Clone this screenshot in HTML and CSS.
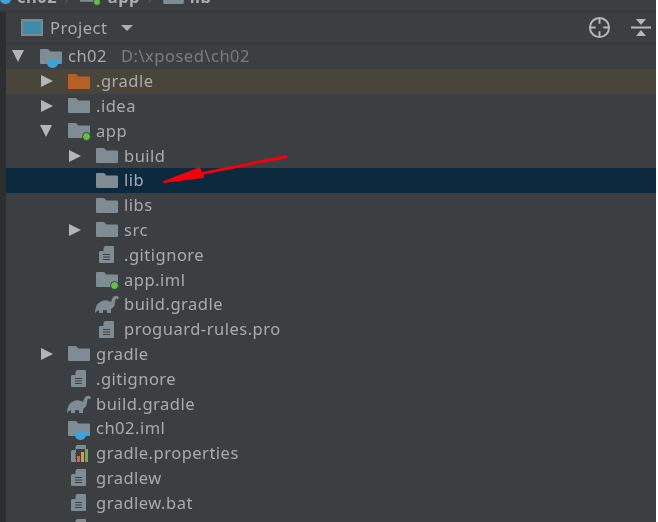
FILE: index.html
```html
<!DOCTYPE html>
<html lang="en">
<head>
    <meta charset="UTF-8">
    <meta name="viewport" content="width=device-width, initial-scale=1.0">
    <title>Project</title>
    <link rel="stylesheet" href="styles.css">
</head>
<body>
    <svg class="sprites" width="0" height="0">
        <symbol id="folder" viewBox="0 0 22 15">
            <path d="M0 1q0-1 1-1h7l2.500 2.500h10.500q1 0 1 1v10.500q0 1-1 1h-20q-1 0-1-1z"/>
        </symbol>
        <symbol id="file" viewBox="0 0 15 17">
            <path d="M6 0h8q1 0 1 1v15q0 1-1 1h-13q-1 0-1-1v-10z"/>
            <path class="cut" d="M4.500 0.500v4.500h-4.500zM4 8h7v1h-7zM4 10.500h7v1h-7zM4 13h7v1h-7z"/>
        </symbol>
        <symbol id="gradle" viewBox="0 0 24 18">
            <path d="M0 18q0-8 5-11q4-3 9-1l2 1q1-5 4-6q3-1 4 2q-1 2-2.500.5q-1.500.5-1.500 3.500q0 5-4 7v4h-4v-3q-2 .5-4 0v3h-4v-3q-2 .5-4 3z"/>
        </symbol>
    </svg>

    <div class="window">
        <div class="breadcrumb">
            <span class="crumb-cup"></span>
            <span class="crumb-text first">ch02</span>
            <span class="crumb-sep">/</span>
            <span class="crumb-module"><svg class="icon crumb-folder"><use href="#folder"/></svg><i class="dot"></i></span>
            <span class="crumb-text">app</span>
            <span class="crumb-sep">/</span>
            <svg class="icon crumb-folder wide"><use href="#folder"/></svg>
            <span class="crumb-text">lib</span>
        </div>

        <div class="panel">
            <div class="strip"></div>
            <div class="main">
                <header class="toolbar">
                    <span class="window-icon"></span>
                    <span class="toolbar-title">Project</span>
                    <span class="caret"></span>
                    <svg class="tool locate" viewBox="0 0 24 24">
                        <circle cx="12" cy="12" r="10"/>
                        <path d="M12 2v6M12 16v6M2 12h6M16 12h6"/>
                    </svg>
                    <svg class="tool collapse" viewBox="0 0 20 18">
                        <path class="solid" d="M5 0h10l-5 6zM5 17h10l-5-6z"/>
                        <path d="M0 8.500h20"/>
                    </svg>
                </header>

                <ul class="tree">
                    <li class="row d0"><i class="arrow open"></i><span class="node-icon"><svg class="icon"><use href="#folder"/></svg><i class="cup"></i></span><span class="label">ch02</span><span class="label path">D:\xposed\ch02</span></li>
                    <li class="row d1 excluded"><i class="arrow"></i><span class="node-icon"><svg class="icon orange"><use href="#folder"/></svg></span><span class="label">.gradle</span></li>
                    <li class="row d1"><i class="arrow"></i><span class="node-icon"><svg class="icon"><use href="#folder"/></svg></span><span class="label">.idea</span></li>
                    <li class="row d1"><i class="arrow open"></i><span class="node-icon"><svg class="icon"><use href="#folder"/></svg><i class="dot"></i></span><span class="label">app</span></li>
                    <li class="row d2"><i class="arrow"></i><span class="node-icon"><svg class="icon"><use href="#folder"/></svg></span><span class="label">build</span></li>
                    <li class="row d2 selected"><i class="arrow none"></i><span class="node-icon"><svg class="icon"><use href="#folder"/></svg></span><span class="label">lib</span></li>
                    <li class="row d2"><i class="arrow none"></i><span class="node-icon"><svg class="icon"><use href="#folder"/></svg></span><span class="label">libs</span></li>
                    <li class="row d2"><i class="arrow"></i><span class="node-icon"><svg class="icon"><use href="#folder"/></svg></span><span class="label">src</span></li>
                    <li class="row d2"><i class="arrow none"></i><span class="node-icon"><svg class="icon file"><use href="#file"/></svg></span><span class="label">.gitignore</span></li>
                    <li class="row d2"><i class="arrow none"></i><span class="node-icon"><svg class="icon"><use href="#folder"/></svg><i class="dot"></i></span><span class="label">app.iml</span></li>
                    <li class="row d2"><i class="arrow none"></i><span class="node-icon"><svg class="icon elephant"><use href="#gradle"/></svg></span><span class="label">build.gradle</span></li>
                    <li class="row d2"><i class="arrow none"></i><span class="node-icon"><svg class="icon file"><use href="#file"/></svg></span><span class="label">proguard-rules.pro</span></li>
                    <li class="row d1"><i class="arrow"></i><span class="node-icon"><svg class="icon"><use href="#folder"/></svg></span><span class="label">gradle</span></li>
                    <li class="row d1"><i class="arrow none"></i><span class="node-icon"><svg class="icon file"><use href="#file"/></svg></span><span class="label">.gitignore</span></li>
                    <li class="row d1"><i class="arrow none"></i><span class="node-icon"><svg class="icon elephant"><use href="#gradle"/></svg></span><span class="label">build.gradle</span></li>
                    <li class="row d1"><i class="arrow none"></i><span class="node-icon"><svg class="icon"><use href="#folder"/></svg><i class="cup"></i></span><span class="label">ch02.iml</span></li>
                    <li class="row d1"><i class="arrow none"></i><span class="node-icon"><svg class="icon file"><use href="#file"/></svg><span class="bars"><i class="b1"></i><i class="b2"></i><i class="b3"></i></span></span><span class="label">gradle.properties</span></li>
                    <li class="row d1"><i class="arrow none"></i><span class="node-icon"><svg class="icon file"><use href="#file"/></svg></span><span class="label">gradlew</span></li>
                    <li class="row d1"><i class="arrow none"></i><span class="node-icon"><svg class="icon file"><use href="#file"/></svg></span><span class="label">gradlew.bat</span></li>
                    <li class="row d1"><i class="arrow none"></i><span class="node-icon"><svg class="icon file"><use href="#file"/></svg></span></li>
                </ul>
            </div>
        </div>
    </div>

    <svg class="red-arrow" viewBox="0 0 130 40">
        <path d="M127 5L127.500 8L44 24.500L43.500 28L4 33L2.500 31.500L40 17L42 22z"/>
    </svg>
</body>
</html>
```

FILE: styles.css
```css
html, body {
    height: 100%;
}

body {
    margin: 0;
    position: relative;
    overflow: hidden;
    background: #fff;
    color: #a9abac;
    font-family: "Noto Sans", "DejaVu Sans", sans-serif;
    font-size: 16.500px;
    letter-spacing: 0.500px;
}

.sprites {
    position: absolute;
}

.window {
    width: 656px;
    height: 100%;
    background: #3c3f41;
    overflow: hidden;
    filter: blur(0.4px);
}

.icon {
    display: block;
    width: 22px;
    height: 15px;
    fill: #7f8c94;
}

.icon.orange {
    fill: #b85f26;
}

.icon.file {
    width: 15px;
    height: 17px;
    margin-left: 3px;
}

.icon.elephant {
    width: 24px;
    height: 18px;
    margin-left: -1px;
}

.cut {
    fill: #3c3f41;
}

/* breadcrumb, cut off by the top of the picture */
.breadcrumb {
    display: flex;
    align-items: flex-end;
    height: 11px;
    overflow: hidden;
    border-bottom: 1px solid #353739;
    font-weight: 700;
    line-height: 18px;
}

.breadcrumb > * {
    flex: none;
    margin-bottom: 7px;
}

.crumb-cup {
    width: 11px;
    height: 5px;
    border-radius: 0 0 5px 5px;
    background: #3fa3d8;
}

.crumb-text {
    margin-bottom: 5px;
}

.crumb-text.first {
    margin-left: 6px;
}

.crumb-sep {
    margin: 0 8px 5px;
    color: #55585a;
    font-weight: 400;
}

.crumb-module {
    position: relative;
    display: block;
    width: 24px;
    margin-right: 4px;
}

.crumb-folder {
    width: 14px;
    height: 14px;
}

.crumb-folder.wide {
    width: 21px;
    margin-right: 6px;
}

.crumb-module .dot {
    right: 3px;
    bottom: -2px;
    width: 8px;
    height: 8px;
}

.panel {
    display: flex;
    height: 510px;
}

.strip {
    flex: none;
    width: 6px;
    background: #2c2e30;
}

.main {
    flex: 1;
    min-width: 0;
}

.toolbar {
    display: flex;
    align-items: center;
    height: 32px;
    box-sizing: border-box;
    padding: 0 5px 0 15px;
    border-bottom: 1px solid #353739;
}

.window-icon {
    width: 22px;
    height: 17px;
    box-sizing: border-box;
    border: 2px solid #7c878d;
    border-top-width: 3px;
    background: #3d8cab;
}

.toolbar-title {
    margin-left: 7px;
}

.caret {
    margin-left: 14px;
    border-left: 6px solid transparent;
    border-right: 6px solid transparent;
    border-top: 6px solid #a9b0b4;
}

.tool {
    width: 23px;
    height: 23px;
    fill: none;
    stroke: #b4b8ba;
    stroke-width: 2;
}

.locate {
    margin-left: auto;
}

.collapse {
    width: 20px;
    height: 18px;
    margin-left: 20px;
}

.collapse .solid {
    fill: #b4b8ba;
    stroke: none;
}

.tree {
    list-style: none;
    margin: 0;
    padding: 0;
}

.row {
    display: flex;
    align-items: center;
    height: 24.800px;
    white-space: nowrap;
}

.row.d0 { padding-left: 6px; }
.row.d1 { padding-left: 34px; }
.row.d2 { padding-left: 62px; }

.row.excluded { background: #49453a; }
.row.selected { background: #0d293e; }

.label {
    margin-bottom: 1px;
}

.arrow {
    flex: none;
    width: 28px;
    height: 12px;
}

.arrow::before {
    content: "";
    display: block;
    width: 0;
    border-top: 6px solid transparent;
    border-bottom: 6px solid transparent;
    border-left: 12px solid #b2b6b8;
    margin-left: 1px;
}

.arrow.open::before {
    border-left: 6px solid transparent;
    border-right: 6px solid transparent;
    border-top: 12px solid #b2b6b8;
    border-bottom: 0;
    margin-left: 0;
}

.arrow.none::before {
    display: none;
}

.node-icon {
    position: relative;
    flex: none;
    width: 28px;
}

.dot {
    position: absolute;
    right: 5px;
    bottom: -3px;
    width: 9px;
    height: 9px;
    border-radius: 50%;
    background: #62c23f;
    border: 1px solid #3c3f41;
    box-sizing: border-box;
}

.cup {
    position: absolute;
    left: 7px;
    bottom: -4px;
    width: 11px;
    height: 8px;
    border-radius: 0 0 5px 5px;
    background: #3fa3d8;
}

.cup::after {
    content: "";
    position: absolute;
    left: 10px;
    top: 0;
    width: 5px;
    height: 3px;
    border-radius: 0 0 3px 0;
    background: #3fa3d8;
}

.bars {
    position: absolute;
    left: 8px;
    bottom: 0;
    display: flex;
    align-items: flex-end;
    gap: 1px;
    padding-left: 1px;
    background: #3c3f41;
}

.bars i {
    width: 3px;
}

.b1 { height: 6px; background: #e0632a; }
.b2 { height: 10px; background: #e09b2a; }
.b3 { height: 13px; background: #62b543; }

.path {
    margin-left: 14px;
    color: #7a7d7f;
}

/* hand-drawn annotation lying over the tree */
.red-arrow {
    position: absolute;
    left: 160px;
    top: 150px;
    width: 130px;
    height: 40px;
    fill: #f5000c;
}
```
